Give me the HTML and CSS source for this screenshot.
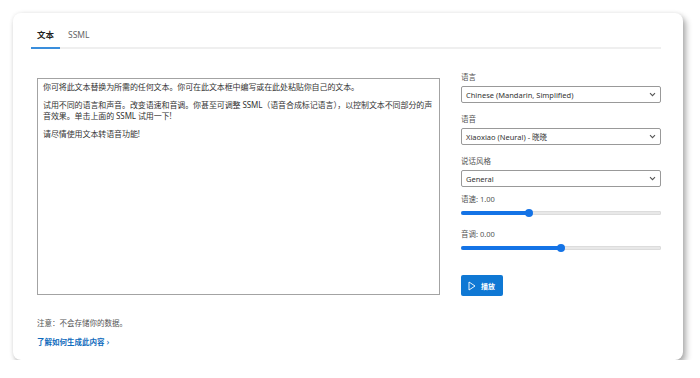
FILE: index.html
```html
<!DOCTYPE html>
<html lang="zh-CN">
<head>
    <meta charset="UTF-8">
    <meta name="viewport" content="width=device-width, initial-scale=1.0">
    <title>文本转语音</title>
    <link rel="stylesheet" href="styles.css">
</head>
<body>
    <div class="card">
        <div class="tabs">
            <div class="tab active">文本</div>
            <div class="tab">SSML</div>
        </div>

        <div class="content">
            <div class="editor-col">
                <div class="editor">
                    <p>你可将此文本替换为所需的任何文本。你可在此文本框中编写或在此处粘贴你自己的文本。</p>
                    <p>试用不同的语言和声音。改变语速和音调。你甚至可调整 SSML（语音合成标记语言），以控制文本不同部分的声音效果。单击上面的 SSML 试用一下!</p>
                    <p>请尽情使用文本转语音功能!</p>
                </div>
                <div class="note">注意：不会存储你的数据。</div>
                <a class="learn-link" href="#">了解如何生成此内容 <span class="chev">&#x203A;</span></a>
            </div>

            <div class="settings-col">
                <div class="field">
                    <div class="field-label">语言</div>
                    <div class="select">
                        <span>Chinese (Mandarin, Simplified)</span>
                        <svg class="caret" width="7" height="5" viewBox="0 0 7 5"><path d="M1 1.2 L3.5 3.7 L6 1.2" fill="none" stroke="#555" stroke-width="1.1"/></svg>
                    </div>
                </div>
                <div class="field">
                    <div class="field-label">语音</div>
                    <div class="select">
                        <span>Xiaoxiao (Neural) - 晓晓</span>
                        <svg class="caret" width="7" height="5" viewBox="0 0 7 5"><path d="M1 1.2 L3.5 3.7 L6 1.2" fill="none" stroke="#555" stroke-width="1.1"/></svg>
                    </div>
                </div>
                <div class="field">
                    <div class="field-label">说话风格</div>
                    <div class="select">
                        <span>General</span>
                        <svg class="caret" width="7" height="5" viewBox="0 0 7 5"><path d="M1 1.2 L3.5 3.7 L6 1.2" fill="none" stroke="#555" stroke-width="1.1"/></svg>
                    </div>
                </div>

                <div class="range-label">语速: 1.00</div>
                <div class="slider">
                    <div class="track"><div class="fill" style="width: 34%;"></div></div>
                    <div class="thumb" style="left: 34%;"></div>
                </div>

                <div class="range-label pitch">音调: 0.00</div>
                <div class="slider">
                    <div class="track"><div class="fill" style="width: 50%;"></div></div>
                    <div class="thumb" style="left: 50%;"></div>
                </div>

                <button class="play-btn">
                    <svg width="8" height="10" viewBox="0 0 8 10"><path d="M1 1 L7 5 L1 9 Z" fill="none" stroke="#fff" stroke-width="0.9" stroke-linejoin="round"/></svg>
                    <span>播放</span>
                </button>
            </div>
        </div>
    </div>
</body>
</html>
```

FILE: styles.css
```css
body {
    margin: 0;
    padding: 0;
    background: #FFFFFF;
    font-family: "Noto Sans", "Noto Sans CJK SC", sans-serif;
    color: #333333;
}

.card {
    box-sizing: border-box;
    width: 670px;
    height: 347px;
    margin: 13px 0 0 13px;
    padding: 17px 22px 0 18px;
    background: #FFFFFF;
    border-radius: 8px;
    box-shadow: 0 0 4px rgba(0,0,0,0.08), 3px 4px 6px rgba(0,0,0,0.32);
}

.tabs {
    display: flex;
    border-bottom: 2px solid #EFEFEF;
    width: 630px;
}

.tab {
    font-size: 8.5px;
    line-height: 10px;
    padding: 0 6px 7px 6px;
    margin-right: 2px;
    margin-bottom: -2px;
    color: #666666;
    border-bottom: 2px solid transparent;
}

.tab.active {
    color: #222222;
    font-weight: bold;
    border-bottom-color: #3A8EDC;
}

.content {
    display: flex;
    margin-top: 23px;
    padding-left: 6px;
}

.editor-col {
    width: 403px;
    padding-top: 6px;
}

.editor {
    box-sizing: border-box;
    height: 217px;
    border: 1px solid #A3A3A3;
    padding: 2px 2px 2px 5px;
    font-size: 8px;
    line-height: 11px;
    letter-spacing: -0.1px;
    color: #333333;
}

.editor p {
    margin: 0 0 7px 0;
}

.note {
    margin-top: 23px;
    font-size: 7.5px;
    line-height: 10px;
    color: #555555;
}

.learn-link {
    display: inline-block;
    margin-top: 5px;
    font-size: 7.5px;
    line-height: 10px;
    font-weight: bold;
    color: #0F6CBD;
    text-decoration: none;
}

.learn-link .chev {
    font-weight: normal;
    font-size: 9px;
}

.settings-col {
    width: 200px;
    margin-left: 21px;
}

.field {
    margin-bottom: 11px;
}

.field-label,
.range-label {
    font-size: 7.5px;
    line-height: 11px;
    color: #555555;
}

.field-label {
    margin-bottom: 3px;
}

.select {
    box-sizing: border-box;
    height: 17px;
    display: flex;
    align-items: center;
    justify-content: space-between;
    padding: 0 4px 0 4px;
    border: 1px solid #999999;
    border-radius: 2px;
    font-size: 7.5px;
    color: #333333;
}

.range-label {
    margin-top: -4px;
}

.range-label.pitch {
    margin-top: 8px;
}

.slider {
    position: relative;
    height: 16px;
    display: flex;
    align-items: center;
}

.track {
    width: 100%;
    height: 4px;
    border-radius: 2px;
    background: #E8E8E8;
    box-shadow: inset 0 0 0 0.5px #D0D0D0;
    overflow: hidden;
}

.fill {
    height: 100%;
    background: #1473E6;
}

.thumb {
    position: absolute;
    top: 4px;
    width: 8px;
    height: 8px;
    margin-left: -4px;
    border-radius: 50%;
    background: #1473E6;
}

.play-btn {
    display: flex;
    align-items: center;
    gap: 5px;
    margin-top: 19px;
    width: 42px;
    height: 21px;
    padding: 0 0 0 7px;
    border: none;
    border-radius: 2px;
    background: #0F78D4;
    color: #FFFFFF;
    font-family: "Noto Sans CJK SC", sans-serif;
    font-size: 7px;
    font-weight: bold;
    cursor: pointer;
}
```
